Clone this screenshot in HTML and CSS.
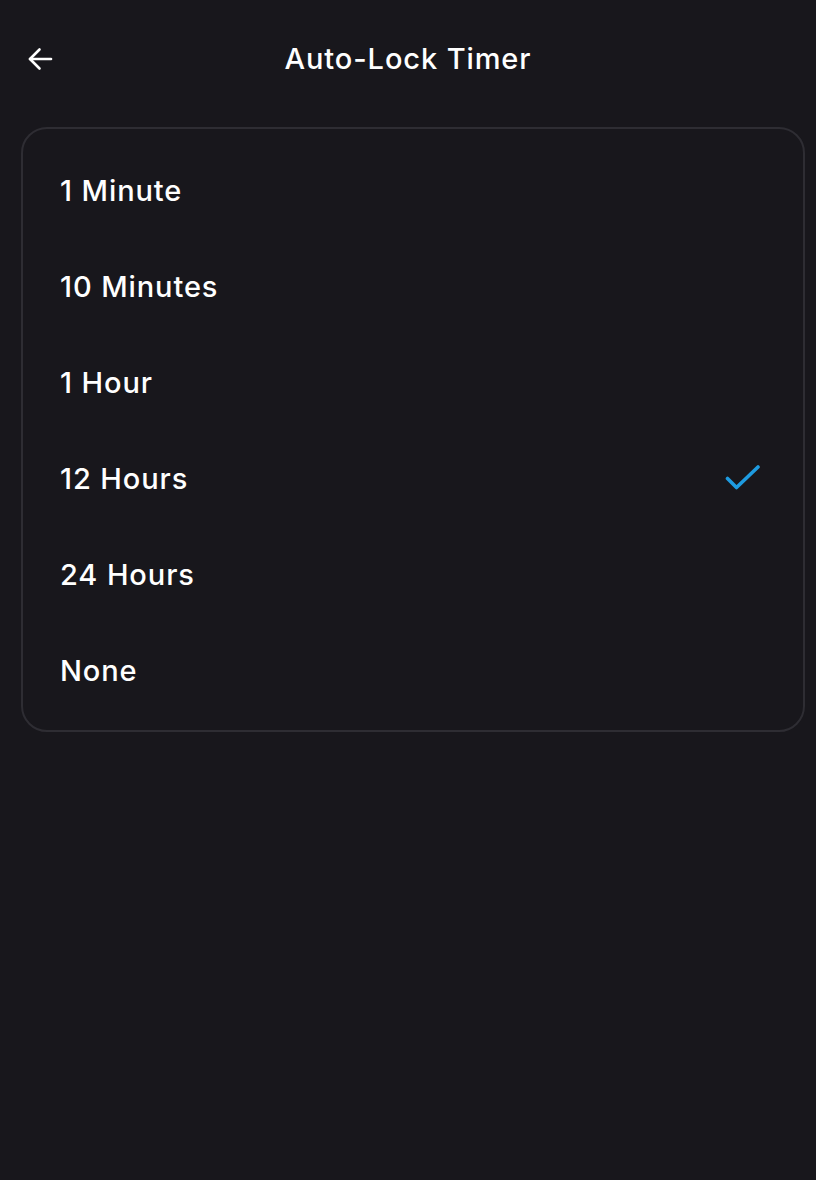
FILE: index.html
```html
<!DOCTYPE html>
<html lang="en">
<head>
<meta charset="utf-8">
<title>Auto-Lock Timer</title>
<link rel="stylesheet" href="styles.css">
</head>
<body>
<div class="screen">
  <header class="header">
    <button class="back" aria-label="Back">
      <svg viewBox="0 0 26 26" width="26" height="26" fill="none" stroke="#ffffff" stroke-width="2.6" stroke-linecap="round" stroke-linejoin="round">
        <path d="M24 13H3"/>
        <path d="M12.5 3.5L3 13l9.5 9.5"/>
      </svg>
    </button>
    <h1 class="title">Auto-Lock Timer</h1>
  </header>
  <ul class="card">
    <li class="row">1 Minute</li>
    <li class="row">10 Minutes</li>
    <li class="row">1 Hour</li>
    <li class="row selected">12 Hours
      <svg class="check" viewBox="0 0 36 28" width="36" height="28" fill="none" stroke="#1e9be0" stroke-width="3.6" stroke-linecap="round" stroke-linejoin="round">
        <path d="M2.5 14.5l9 9L33 3"/>
      </svg>
    </li>
    <li class="row">24 Hours</li>
    <li class="row">None</li>
  </ul>
</div>
</body>
</html>
```
FILE: styles.css
```css
html, body {
  margin: 0;
  padding: 0;
  background: #18171c;
}
body {
  font-family: Inter, "Noto Sans", "Liberation Sans", sans-serif;
  color: #ffffff;
  width: 816px;
  height: 1180px;
}
.screen {
  display: flex;
  flex-direction: column;
}
.header {
  position: relative;
  height: 116px;
  display: flex;
  align-items: center;
  justify-content: center;
}
.back {
  position: absolute;
  left: 27px;
  top: 46px;
  width: 26px;
  height: 26px;
  padding: 0;
  border: 0;
  background: none;
  display: flex;
}
.title {
  margin: 0;
  font-size: 29px;
  font-weight: 500;
  letter-spacing: 0.9px;
}
.card {
  list-style: none;
  margin: 11px 11px 0 21px;
  padding: 13px 0 12px;
  border: 2px solid #2e2d33;
  border-radius: 26px;
}
.row {
  height: 96px;
  display: flex;
  align-items: center;
  justify-content: space-between;
  padding: 0 42px 0 37px;
  font-size: 29px;
  font-weight: 500;
  letter-spacing: 0.9px;
}
.check {
  display: block;
  margin-top: 0;
}
```
